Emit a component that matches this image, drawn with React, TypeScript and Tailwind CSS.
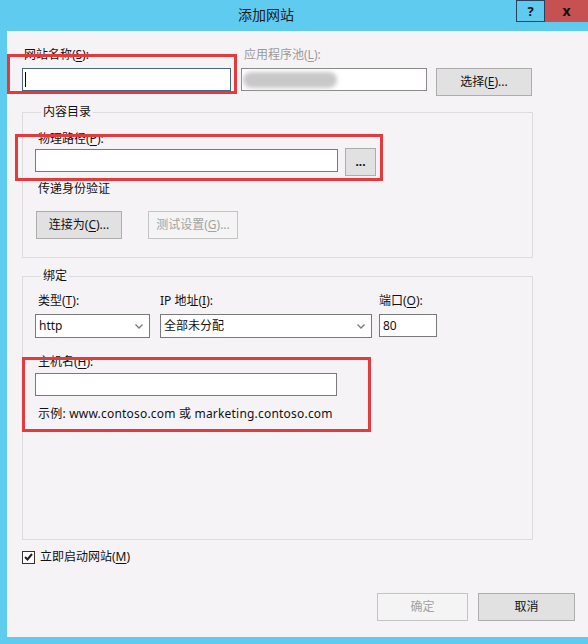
import type { ReactNode } from "react";

const font = { fontFamily: '"Noto Sans", "Noto Sans CJK SC", sans-serif' };

function Key({ children }: { children: ReactNode }) {
  return <span className="underline underline-offset-2">{children}</span>;
}

function Chevron() {
  return (
    <svg width="8" height="5" viewBox="0 0 8 5" className="ml-auto mr-[6px]">
      <path d="M0.5 0.5 L4 4 L7.5 0.5" fill="none" stroke="#7a7a7a" strokeWidth="1.3" />
    </svg>
  );
}

function Button({
  children,
  className,
  disabled,
}: {
  children: ReactNode;
  className: string;
  disabled?: boolean;
}) {
  return (
    <div
      className={
        disabled
          ? `flex h-[28px] items-center justify-center border border-[#c4c4c4] bg-[#f4f4f4] text-[#a3a3a3] ${className}`
          : `flex h-[28px] items-center justify-center border border-[#adadad] bg-[#e1e1e1] text-[#111] ${className}`
      }
    >
      {children}
    </div>
  );
}

export default function App() {
  return (
    <div
      className="relative flex h-[644px] w-[588px] flex-col overflow-hidden bg-[#5ecbef] text-[12px] leading-[16px] text-[#111]"
      style={font}
    >
      {/* title bar */}
      <div className="flex h-[31px] items-start">
        <span className="ml-[238px] mt-[6px] text-[14px] leading-[18px] text-[#1a1a1a]">添加网站</span>
        <div className="ml-auto flex h-[22px]">
          <div className="flex w-[29px] items-center justify-center border border-[#27425e] text-[13px] font-bold text-[#111]">
            ?
          </div>
          <div className="flex w-[43px] items-center justify-center bg-[#c75050] text-[14px] font-bold text-[#111]">
            x
          </div>
        </div>
      </div>

      {/* client area */}
      <div className="mb-[7px] ml-[7px] flex flex-1 flex-col bg-[#f5f3f6] pt-[16px]">
        <div className="flex pl-[15px]">
          <div className="flex flex-col">
            <span className="pl-[2px]">
              网站名称(<Key>S</Key>):
            </span>
            <div className="mt-[5px] flex h-[23px] w-[209px] items-center border border-[#4a6584] bg-white">
              <span className="ml-[2px] h-[15px] w-px bg-black" />
            </div>
          </div>
          <div className="ml-[10px] flex flex-col">
            <span className="pl-[3px] text-[#9a9a9a]">
              应用程序池(<Key>L</Key>):
            </span>
            <div className="mt-[5px] flex h-[23px] w-[186px] items-center border border-[#8a8a8a] bg-white">
              <div className="ml-[1px] h-[16px] w-[94px] rounded-full bg-[#c8c8c8] blur-[2px]" />
            </div>
          </div>
          <div className="ml-[9px] flex flex-col">
            <span className="h-[16px]" />
            <Button className="mt-[5px] w-[96px] h-[27px]">
              选择(<Key>E</Key>)...
            </Button>
          </div>
        </div>

        {/* content directory */}
        <fieldset className="ml-[15px] mt-[8px] w-[511px] border border-[#dcdcdc] pb-[18px] pl-[12px]">
          <legend className="ml-[6px] px-[2px] leading-[16px]">内容目录</legend>
          <span className="mt-[11px] block pl-[3px]">
            物理路径(<Key>P</Key>):
          </span>
          <div className="mt-[1px] flex items-start">
            <div className="mt-[1px] h-[23px] w-[303px] border border-[#7a7a7a] bg-white" />
            <Button className="ml-[7px] w-[31px] font-bold leading-[10px]">...</Button>
          </div>
          <span className="mt-[5px] block pl-[3px]">传递身份验证</span>
          <div className="mt-[14px] flex">
            <Button className="ml-[1px] w-[86px]">
              连接为(<Key>C</Key>)...
            </Button>
            <Button disabled className="ml-[26px] w-[90px]">
              测试设置(<Key>G</Key>)...
            </Button>
          </div>
        </fieldset>

        {/* binding */}
        <fieldset className="ml-[15px] mt-[10px] w-[511px] border border-[#dcdcdc] pb-[117px] pl-[12px]">
          <legend className="ml-[6px] px-[2px] leading-[16px]">绑定</legend>
          <div className="mt-[9px] flex items-start">
            <div className="flex flex-col">
              <span className="pl-[3px]">
                类型(<Key>T</Key>):
              </span>
              <div className="mt-[5px] flex h-[24px] w-[115px] items-center border border-[#7a7a7a] bg-white pl-[3px]">
                http
                <Chevron />
              </div>
            </div>
            <div className="ml-[10px] flex flex-col">
              <span>
                IP 地址(<Key>I</Key>):
              </span>
              <div className="mt-[5px] flex h-[24px] w-[212px] items-center border border-[#7a7a7a] bg-white pl-[3px]">
                全部未分配
                <Chevron />
              </div>
            </div>
            <div className="ml-[7px] flex flex-col">
              <span>
                端口(<Key>O</Key>):
              </span>
              <div className="mt-[5px] flex h-[23px] w-[58px] items-center border border-[#7a7a7a] bg-white pl-[3px]">
                80
              </div>
            </div>
          </div>
          <span className="mt-[16px] block pl-[3px]">
            主机名(<Key>H</Key>):
          </span>
          <div className="mt-[3px] h-[23px] w-[302px] border border-[#7a7a7a] bg-white" />
          <span className="mt-[10px] block pl-[3px] tracking-[0.2px]">
            示例: www.contoso.com 或 marketing.contoso.com
          </span>
        </fieldset>

        <div className="ml-[15px] mt-[9px] flex items-center">
          <div className="flex h-[13px] w-[13px] items-center justify-center border border-[#333] bg-white">
            <svg width="9" height="8" viewBox="0 0 9 8">
              <path d="M1 4 L3.5 6.5 L8 1" fill="none" stroke="#222" strokeWidth="2" />
            </svg>
          </div>
          <span className="ml-[5px]">
            立即启动网站(<Key>M</Key>)
          </span>
        </div>

        <div className="mt-[28px] flex justify-end pr-[13px]">
          <Button disabled className="w-[91px]">
            确定
          </Button>
          <Button className="ml-[10px] w-[97px] border-[#707070] bg-[#dddddd]">取消</Button>
        </div>
      </div>

      {/* red annotation frames */}
      <div className="pointer-events-none absolute left-[7px] top-[54px] h-[40px] w-[230px] border-[3px] border-[#e53a3c]" />
      <div className="pointer-events-none absolute left-[15px] top-[134px] h-[47px] w-[368px] border-[3px] border-[#e53a3c]" />
      <div className="pointer-events-none absolute left-[22px] top-[357px] h-[75px] w-[349px] border-[3px] border-[#e53a3c]" />
    </div>
  );
}
